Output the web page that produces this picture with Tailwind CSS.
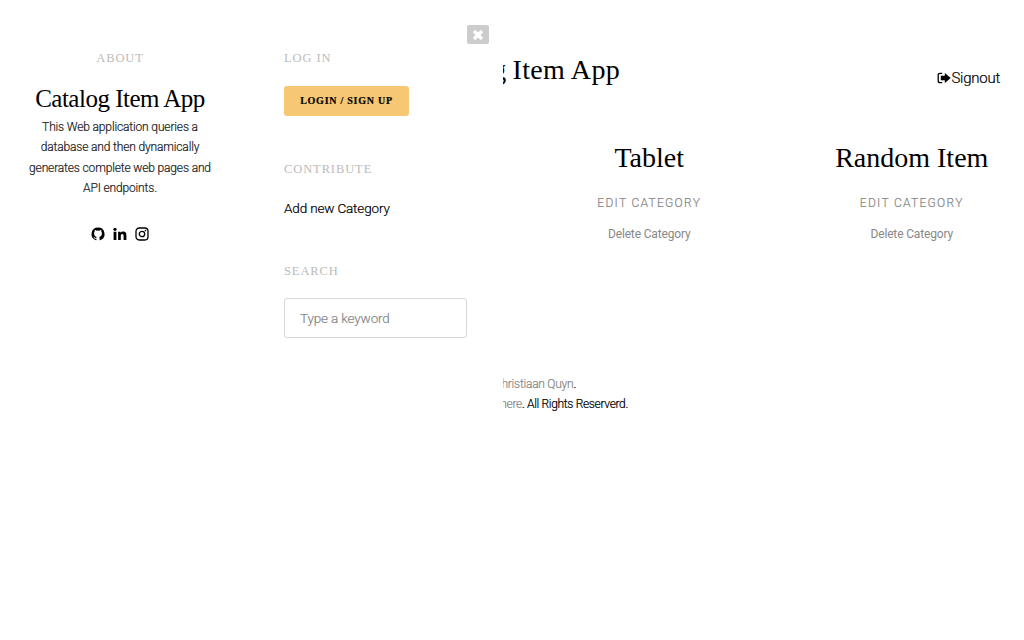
<!DOCTYPE html>
<html lang="en">
<head>
<meta charset="utf-8">
<title>Catalog Item App</title>
<script src="https://cdn.jsdelivr.net/npm/@tailwindcss/browser@4"></script>
</head>
<body class="relative h-[640px] w-[1024px] overflow-hidden bg-white font-['Roboto',sans-serif] font-light text-black">
<main class="flex h-full flex-col">
  <header class="flex h-[130px] justify-between pr-[24px] pl-[420px]">
    <h1 class="w-[200px] pt-[50px] text-right font-['Liberation_Serif',serif] text-[28px] leading-[40px] font-normal tracking-[0.3px] whitespace-nowrap"><span class="float-right">Catalog<span class="tracking-[-0.9px]"> </span>Item App</span></h1>
    <a class="mt-[68px] flex h-[20px] items-center text-[15px] leading-[20px] tracking-[-0.25px] [-webkit-text-stroke:0.2px]" href="#"><svg class="h-[14px] w-[14px]" viewBox="0 0 14 14"><path d="M5.2 2.3H3.2Q1.2 2.3 1.2 4.3v5.4q0 2 2 2h2" fill="none" stroke="currentColor" stroke-width="1.3"/><path d="M3.8 4.8h4V1.9L13.7 7l-5.900 5.100V9.200h-4z" fill="currentColor"/></svg>Signout</a>
  </header>
  <section class="ml-[518px] grid w-[525px] grid-cols-2 pt-[8px] text-center">
    <article>
      <h2 class="font-['Liberation_Serif',serif] text-[28px] leading-[40px] font-normal">Tablet</h2>
      <a class="mt-[15px] block text-[12px] leading-[20px] tracking-[1.3px] text-[#888] [-webkit-text-stroke:0.2px]" href="#">EDIT CATEGORY</a>
      <a class="mt-[11px] block text-[12px] leading-[20px] font-normal tracking-[-0.15px] text-[#888]" href="#">Delete Category</a>
    </article>
    <article>
      <h2 class="font-['Liberation_Serif',serif] text-[28px] leading-[40px] font-normal">Random Item</h2>
      <a class="mt-[15px] block text-[12px] leading-[20px] tracking-[1.3px] text-[#888] [-webkit-text-stroke:0.2px]" href="#">EDIT CATEGORY</a>
      <a class="mt-[11px] block text-[12px] leading-[20px] font-normal tracking-[-0.15px] text-[#888]" href="#">Delete Category</a>
    </article>
  </section>
  <footer class="mt-[130px] ml-[428px] w-[200px] text-[12px] leading-[20px] tracking-[-0.2px] whitespace-nowrap [-webkit-text-stroke:0.2px]">
    <p class="w-[148px] text-right tracking-[-0.25px]"><span class="text-[#888]">Christiaan Quyn</span>.</p>
    <p class="text-right tracking-[-0.33px]"><span class="text-[#888]">here</span>. All Rights Reserverd.</p>
  </footer>
</main>

<aside class="absolute inset-y-0 left-0 flex w-[503px] bg-white">
  <section class="flex w-[240px] flex-col items-center pt-[48px] text-center">
    <h3 class="font-['Liberation_Serif',serif] text-[12.5px] leading-[20px] font-normal tracking-[0.9px] text-[#bbb]">ABOUT</h3>
    <h2 class="mt-[15px] font-['Liberation_Serif',serif] text-[25px] leading-[32px] font-normal tracking-[-0.5px]">Catalog Item App</h2>
    <p class="mt-[2px] text-[12px] leading-[20.4px] tracking-[-0.15px] whitespace-nowrap text-[#222] [-webkit-text-stroke:0.2px]">This Web application queries a<br>database and then dynamically<br>generates complete web pages and<br>API endpoints.</p>
    <div class="mt-[28px] flex gap-[8px]">
      <svg class="size-[14px]" viewBox="0 0 24 24" fill="currentColor"><path d="M12 1A11.2 11.2 0 0 0 8.500 22.800c.6.1.8-.2.8-.5v-2.100c-3.100.7-3.800-1.300-3.800-1.300-.5-1.300-1.300-1.700-1.300-1.700-1-.7.1-.7.1-.7 1.100.1 1.700 1.200 1.700 1.200 1 1.700 2.700 1.200 3.300.9.1-.7.4-1.200.7-1.500-.9-.1-4.700-1.300-4.700-5.800 0-1.500.3-2.700 1.100-3.500-.1-.3-.4-1.400.2-2.600 1.200 0 2.200.6 3 1.100a8 8 0 0 1 4.800 0c.8-.5 1.800-1.100 3-1.100.6 1.200.3 2.300.2 2.600.8.800 1.100 2 1.100 3.500 0 4.500-3.800 5.700-4.700 5.800.4.400.8 1.100.8 2.100v3.100c0 .3.200.6.800.5A11.200 11.200 0 0 0 12 1z"/></svg>
      <svg class="size-[14px]" viewBox="0 0 14 14" fill="currentColor"><circle cx="2" cy="2.300" r="1.600"/><path d="M.6 4.800h2.800V13H.6zM5.100 4.800h2.600v1.100C8.200 5.100 9 4.600 10.200 4.600c2.400 0 3.200 1.500 3.200 3.800V13h-2.800V8.900c0-1.200-.3-2-1.300-2s-1.500.8-1.500 2V13H5.100z"/></svg>
      <svg class="size-[14px]" viewBox="0 0 14 14" fill="none" stroke="currentColor" stroke-width="1.300"><rect x="1" y="1" width="12" height="12" rx="3.200"/><circle cx="7" cy="7" r="2.700"/><circle cx="10.400" cy="3.600" r=".8" fill="currentColor" stroke="none"/></svg>
    </div>
  </section>
  <section class="ml-[44px] flex w-[183px] flex-col items-start pt-[48px]">
    <h3 class="font-['Liberation_Serif',serif] text-[12.5px] leading-[20px] font-normal tracking-[0.9px] text-[#bbb]">LOG IN</h3>
    <button class="mt-[18px] h-[30px] w-[125px] rounded-[3px] bg-[#f6c873] font-['Liberation_Serif',serif] text-[10px] leading-[30px] font-bold tracking-[0.75px] [-webkit-text-stroke:0.2px]">LOGIN / SIGN UP</button>
    <h3 class="mt-[43px] font-['Liberation_Serif',serif] text-[12.5px] leading-[20px] font-normal tracking-[0.9px] text-[#bbb]">CONTRIBUTE</h3>
    <a class="mt-[19px] text-[13.5px] leading-[20px] tracking-[-0.15px] [-webkit-text-stroke:0.2px]" href="#">Add new Category</a>
    <h3 class="mt-[43px] font-['Liberation_Serif',serif] text-[12.5px] leading-[20px] font-normal tracking-[0.9px] text-[#bbb]">SEARCH</h3>
    <input class="mt-[17px] h-[40px] w-[183px] rounded-[3px] border border-[#d8d8d8] px-[15px] text-[13.5px] tracking-[-0.15px] [-webkit-text-stroke:0.2px] placeholder:text-[#888]" placeholder="Type a keyword">
  </section>
  <button class="mt-[25px] flex h-[19px] w-[22px] items-center justify-center rounded-[2px] bg-[#ccc]" aria-label="Close"><svg class="size-[12px]" viewBox="0 0 12 12"><path d="M2 2l8 8M10 2l-8 8" stroke="white" stroke-width="3.4"/></svg></button>
</aside>
</body>
</html>
